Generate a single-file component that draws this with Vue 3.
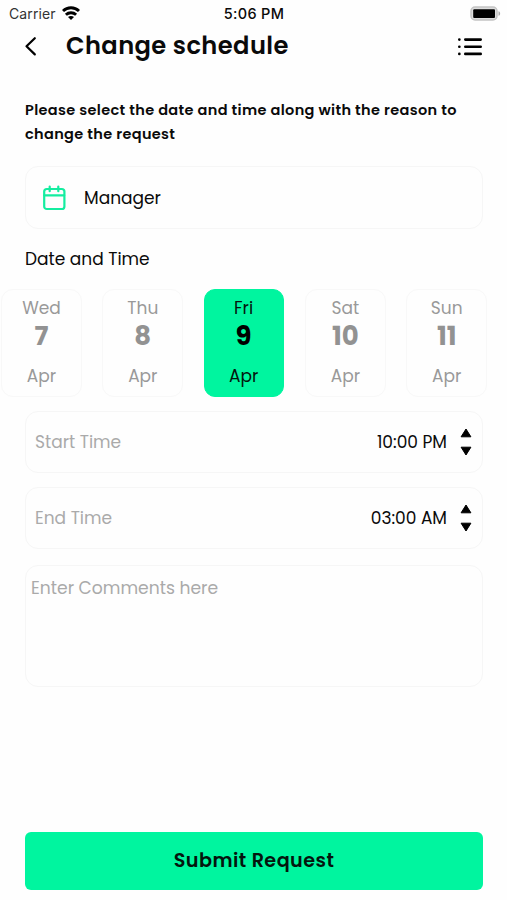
<script setup>
import { ref } from 'vue'

const days = [
  { name: 'Wed', date: 7, month: 'Apr' },
  { name: 'Thu', date: 8, month: 'Apr' },
  { name: 'Fri', date: 9, month: 'Apr' },
  { name: 'Sat', date: 10, month: 'Apr' },
  { name: 'Sun', date: 11, month: 'Apr' },
]
const selected = ref(9)

const times = [
  { label: 'Start Time', value: '10:00 PM', kind: 'start' },
  { label: 'End Time', value: '03:00 AM', kind: 'end' },
]
</script>

<template>
  <div class="screen">
    <div class="status">
      <div class="carrier">
        <span class="carrier-name">Carrier</span>
        <svg class="wifi" width="18" height="14" viewBox="0 0 18 14" fill="none" stroke="#000" stroke-width="2.900">
          <path d="M1 5C5.500.7 12.500.7 17 5" />
          <path d="M3.900 8.700c2.900-2.700 7.300-2.700 10.200 0" />
          <path d="M9 14 6 11c1.700-1.500 4.300-1.500 6 0Z" fill="#000" stroke="none" />
        </svg>
      </div>
      <span class="clock">5:06 PM</span>
      <svg class="battery" width="31" height="15" viewBox="0 0 31 15">
        <rect x="1" y="1" width="26" height="13" rx="4" fill="#ddd" stroke="#c4c4c4" stroke-width="1.500" />
        <rect x="3.200" y="3.200" width="21.800" height="8.800" rx="1" fill="#000" />
        <path d="M28.500 5.200c2.200.6 2.200 4 0 4.600Z" fill="#aaa" />
      </svg>
    </div>

    <header class="header">
      <svg class="back" width="14" height="20" viewBox="0 0 14 20" fill="none" stroke="#000" stroke-width="2.200" stroke-linecap="round" stroke-linejoin="round">
        <path d="M10.800 2.200 2.500 10.300l8.300 8.100" />
      </svg>
      <h1 class="title">Change schedule</h1>
      <svg class="list" width="26" height="20" viewBox="0 0 26 20" fill="none" stroke="#000" stroke-width="2.600" stroke-linecap="round">
        <path d="M8.300 2.600h15.400M8.300 9.800h15.400M8.300 16.900h15.400" />
        <path d="M2.300 2.600h.1M2.300 9.800h.1M2.300 16.900h.1" />
      </svg>
    </header>

    <p class="intro"><span class="line one">Please select the date and time along with the reason to</span> <span class="line two">change the request</span></p>

    <div class="box manager">
      <svg width="24" height="26" viewBox="0 0 24 26" fill="none" stroke="#14eda0" stroke-width="2.200" stroke-linecap="round">
        <rect x="2.200" y="4" width="20.200" height="20" rx="2.600" />
        <path d="M2.200 10.300h20M7.700 1.600v4.600M16.300 1.600v4.600" />
      </svg>
      <span class="manager-name">Manager</span>
    </div>

    <h2 class="section">Date and Time</h2>

    <div class="days">
      <div v-for="d in days" :key="d.date" class="day" :class="{ active: d.date === selected }" @click="selected = d.date">
        <span class="name">{{ d.name }}</span>
        <span class="date">{{ d.date }}</span>
        <span class="month">{{ d.month }}</span>
      </div>
    </div>

    <div v-for="t in times" :key="t.kind" class="box time" :class="t.kind">
      <span class="time-label">{{ t.label }}</span>
      <span class="time-value">{{ t.value }}</span>
      <svg class="stepper" width="12" height="28" viewBox="0 0 12 28" stroke="#000" stroke-linejoin="round">
        <path d="M6 1 10.900 8.800H1.100ZM6 27 10.900 19.200H1.100Z" />
      </svg>
    </div>

    <div class="box comments"><span class="placeholder">Enter Comments here</span></div>

    <button class="submit"><span>Submit Request</span></button>
  </div>
</template>

<style>
body {
  background: #fefefe;
}
</style>

<style scoped>
.screen {
  box-sizing: border-box;
  width: 507px;
  height: 900px;
  display: flex;
  flex-direction: column;
  overflow: hidden;
  background: #fefefe;
  color: #0a0a0a;
  font-family: Poppins, Inter, sans-serif;
  white-space: nowrap;
}
.status {
  height: 26px;
  margin-bottom: 2px;
  display: grid;
  grid-template-columns: 1fr auto 1fr;
  align-items: center;
  padding: 0 6px 0 9px;
  font-family: Inter, sans-serif;
  font-size: 14px;
}
.carrier {
  display: flex;
  align-items: center;
  gap: 6px;
  color: #333;
}
.carrier-name {
  letter-spacing: 0.1px;
}
.clock {
  font-size: 14.500px;
  font-weight: 500;
  letter-spacing: 0.300px;
  margin-right: 2px;
}
.battery {
  justify-self: end;
}
.header {
  height: 36px;
  display: flex;
  align-items: center;
  padding: 0 24px;
}
.title {
  margin: 0 auto 0 28px;
  font-size: 24.200px;
  line-height: 36px;
  font-weight: 600;
  letter-spacing: 0.400px;
}
.list {
  margin-top: 1px;
}
.intro {
  margin: 34px 25px 1px;
  font-size: 14.500px;
  line-height: 24px;
  font-weight: 600;
  letter-spacing: 0.335px;
}
.line {
  display: block;
}
.box {
  box-sizing: border-box;
  margin: 0 24px 0 25px;
  border: 1.500px solid #f6f6f6;
  border-radius: 13px;
  display: flex;
  align-items: center;
  flex-shrink: 0;
}
.manager {
  margin-top: 19px;
  height: 63px;
  padding-left: 16px;
  gap: 18px;
  font-size: 17px;
}
.section {
  margin: 18px 25px 0;
  font-size: 17px;
  line-height: 24px;
  font-weight: 400;
}
.days {
  margin: 18px 0 0 1px;
  display: grid;
  grid-template-columns: repeat(5, 81px);
  column-gap: 20.300px;
}
.day {
  box-sizing: border-box;
  height: 108px;
  border: 1px solid #f8f8f8;
  border-radius: 12px;
  display: flex;
  flex-direction: column;
  align-items: center;
  color: #999;
  font-size: 17px;
  line-height: 24px;
  padding-top: 6px;
}
.date {
  font-size: 26px;
  line-height: 32px;
  font-weight: 700;
  color: #929292;
}
.month {
  margin-top: 12px;
}
.active {
  width: 80px;
  background: #00f59f;
  border-color: #00f59f;
  border-radius: 11px;
  color: #04150e;
}
.active .date {
  color: #000;
}
.time {
  height: 62px;
  padding: 0 10px 0 9px;
  font-size: 17px;
}
.start {
  margin-top: 14px;
}
.end {
  margin-top: 14px;
}
.time-label {
  flex: 1;
  color: #aaa;
}
.stepper {
  margin-left: 13px;
}
.comments {
  margin-top: 16px;
  height: 122px;
  align-items: flex-start;
  padding: 10px 5px;
  color: #aaa;
  font-size: 17.150px;
  line-height: 24px;
}
.submit {
  margin: 145px 24px 0 25px;
  height: 58px;
  flex-shrink: 0;
  border: 0;
  border-radius: 6px;
  background: #00f59f;
  color: #04150e;
  font: 600 19.200px/28px Poppins, Inter, sans-serif;
  letter-spacing: 0.440px;
}
</style>
